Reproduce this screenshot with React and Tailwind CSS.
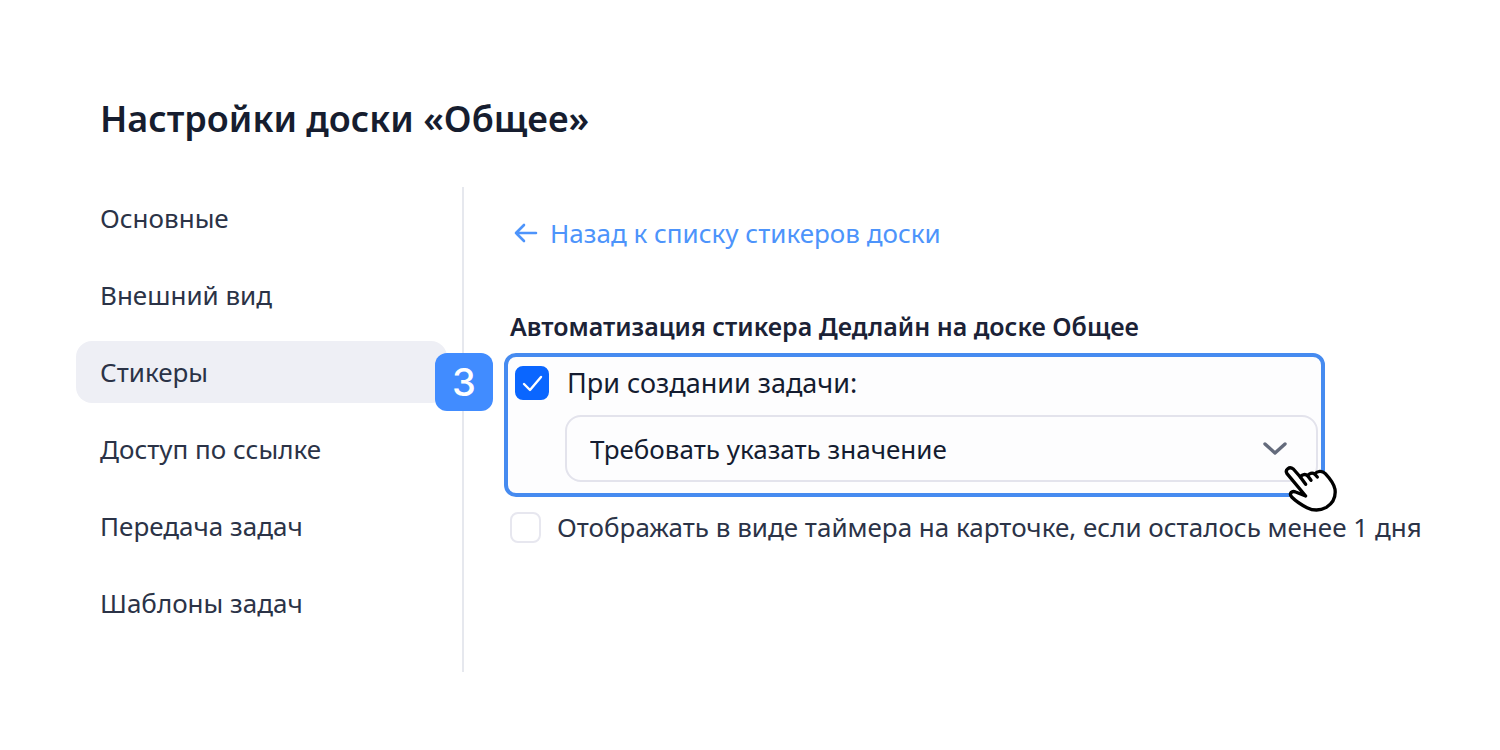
import React, { useState } from "react";

const tabs = [
  "Основные",
  "Внешний вид",
  "Стикеры",
  "Доступ по ссылке",
  "Передача задач",
  "Шаблоны задач",
];

const HandPointer = ({ className }) => (
  <svg
    className={className}
    viewBox="250 375 165 144"
    fill="none"
    stroke="#000"
    strokeWidth="10"
    strokeLinecap="round"
    strokeLinejoin="round"
    aria-hidden="true"
  >
    <path
      fill="#fff"
      d="M318 468 L262 401 C255 389 269 378 281 387 L302 411 C307 403 317 401 324 407 C328 400 338 397 345 402 C353 393 367 391 377 401 C391 416 403 430 406 448 C409 472 398 491 380 502 C362 512 340 512 322 503 C306 495 290 485 276 471 C267 460 277 451 288 456 Z"
    />
    <path d="M302 411 L318 433 M324 407 L334 421 M345 402 L353 411" />
  </svg>
);

const App = () => {
  const [activeTab, setActiveTab] = useState("Стикеры");
  const [onCreate, setOnCreate] = useState(true);
  const [showTimer, setShowTimer] = useState(false);
  const [action, setAction] = useState("require");

  return (
    <div className="min-h-screen bg-white pt-[92px] pb-[78px] pl-[76px] pr-16 font-['Noto_Sans','Open_Sans',sans-serif] text-[26px] leading-9 text-[#2b3347]">
      <h1 className="pl-6 text-4xl leading-[54px] font-semibold text-[#161d2f]">
        Настройки доски «Общее»
      </h1>

      <div className="mt-[41px] flex">
        {/* Tabs */}
        <nav className="flex min-h-[485px] w-[388px] shrink-0 flex-col gap-[15px] border-r-2 border-[#e6e8ee] pr-[15px]">
          {tabs.map((tab) => (
            <button
              key={tab}
              type="button"
              onClick={() => setActiveTab(tab)}
              className={`h-[62px] rounded-2xl px-6 text-left ${
                activeTab === tab ? "bg-[#eeeff5]" : ""
              }`}
            >
              {tab}
            </button>
          ))}
        </nav>

        <main className="min-w-0 flex-1 pl-10 pt-7">
          <a href="#stickers" className="ml-2.5 inline-flex items-center gap-3 text-[#4d94fb]">
            <svg
              className="h-5 w-6"
              viewBox="0 0 24 20"
              fill="none"
              stroke="currentColor"
              strokeWidth="2.6"
              strokeLinecap="round"
              strokeLinejoin="round"
              aria-hidden="true"
            >
              <path d="M22 10H2M10 2L2 10l8 8" />
            </svg>
            Назад к списку стикеров доски
          </a>

          <h2 className="mt-[57px] pl-1.5 text-[25px] leading-9 font-semibold text-[#1b2236]">
            Автоматизация стикера Дедлайн на доске Общее
          </h2>

          {/* Highlighted step */}
          <section className="relative mt-[9px] mr-[111px] rounded-xl border-4 border-[#468bf0] bg-[#fdfdfe] pt-2 pr-[3px] pb-[11px] pl-[7px] text-[#141c30]">
            <label className="flex items-center gap-[18px] text-[27px]">
              <span className="relative flex h-[34px] w-[34px] shrink-0">
                <input
                  type="checkbox"
                  checked={onCreate}
                  onChange={(e) => setOnCreate(e.target.checked)}
                  className="h-full w-full appearance-none rounded-lg border-2 border-[#e4e5ed] bg-white checked:border-[#0a66ff] checked:bg-[#0a66ff]"
                />
                {onCreate && (
                  <svg
                    className="pointer-events-none absolute inset-0"
                    viewBox="0 0 34 34"
                    fill="none"
                    stroke="#fff"
                    strokeWidth="2.4"
                    strokeLinecap="round"
                    strokeLinejoin="round"
                    aria-hidden="true"
                  >
                    <path d="M9 18l6 6 11-13" />
                  </svg>
                )}
              </span>
              При создании задачи:
            </label>

            <div className="relative mt-[14px] ml-[50px]">
              <select
                aria-label="Действие при создании задачи"
                value={action}
                onChange={(e) => setAction(e.target.value)}
                className="h-[67px] w-full appearance-none rounded-2xl border-2 border-[#e3e3ec] bg-[#fdfdfe] pr-16 pl-[23px]"
              >
                <option value="require">Требовать указать значение</option>
                <option value="none">Ничего не делать</option>
              </select>
              <svg
                className="pointer-events-none absolute top-[27px] right-[31px] h-[14px] w-6"
                viewBox="0 0 24 14"
                fill="none"
                stroke="#646b7c"
                strokeWidth="3.4"
                strokeLinecap="round"
                strokeLinejoin="round"
                aria-hidden="true"
              >
                <path d="M2 2l10 9L22 2" />
              </svg>
            </div>

            <span className="absolute -top-1 -left-[73px] flex h-[58px] w-[58px] items-center justify-center rounded-xl bg-[#418cff] font-['Inter',sans-serif] text-[38px] leading-none font-medium text-white">
              3
            </span>
            <HandPointer className="pointer-events-none absolute -right-[17px] -bottom-5 h-12 w-[55px]" />
          </section>

          <label className="mt-3 flex items-center gap-4 pl-1.5 whitespace-nowrap">
            <input
              type="checkbox"
              checked={showTimer}
              onChange={(e) => setShowTimer(e.target.checked)}
              className="h-[31px] w-[31px] shrink-0 appearance-none rounded-lg border-2 border-[#e7e7ef] bg-white checked:border-[#0a66ff] checked:bg-[#0a66ff]"
            />
            Отображать в виде таймера на карточке, если осталось менее 1 дня
          </label>
        </main>
      </div>
    </div>
  );
};

export default App;
